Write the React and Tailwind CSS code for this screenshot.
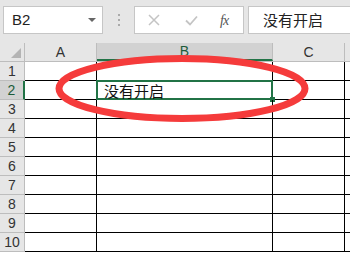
import React from 'react';

const rows = [1, 2, 3, 4, 5, 6, 7, 8, 9, 10];

const App = () => {
  return (
    <div className="relative w-[350px] h-[253px] overflow-hidden bg-white font-['Liberation_Sans','Noto_Sans_CJK_SC',sans-serif]">
      {/* formula bar */}
      <div className="flex items-start h-[43px] pt-[6px] bg-[#e6e6e6]">
        <div className="shrink-0 ml-[3px] w-[100px] h-[28px] bg-white border border-[#c6c6c6] flex items-center justify-between pl-[8px] pr-[6px]">
          <span className="text-[15px] text-[#222]">B2</span>
          <span className="w-0 h-0 border-l-[4px] border-r-[4px] border-t-[4px] border-l-transparent border-r-transparent border-t-[#666]"></span>
        </div>
        <div className="shrink-0 w-[31px] h-[28px] flex flex-col items-center justify-center gap-[3px]">
          <span className="w-[2px] h-[2px] bg-[#aaa]"></span>
          <span className="w-[2px] h-[2px] bg-[#aaa]"></span>
          <span className="w-[2px] h-[2px] bg-[#aaa]"></span>
        </div>
        <div className="shrink-0 w-[110px] h-[28px] bg-white border border-[#c6c6c6] flex items-center">
          <svg width="12" height="12" viewBox="0 0 12 12" className="ml-[13px]">
            <path d="M1 1 L11 11 M11 1 L1 11" stroke="#c4c4c4" strokeWidth="1.5" fill="none" />
          </svg>
          <svg width="13" height="11" viewBox="0 0 13 11" className="ml-[25px]">
            <path d="M1 5.5 L5 9.5 L12 1.5" stroke="#c4c4c4" strokeWidth="1.8" fill="none" />
          </svg>
          <span className="ml-[22px] text-[14px] italic text-[#555] font-['Liberation_Serif',serif] tracking-[-1px]">fx</span>
        </div>
        <div className="shrink-0 ml-[4px] w-[120px] h-[28px] bg-white border border-[#c6c6c6] flex items-center pl-[14px]">
          <span className="text-[15px] text-[#222] font-['Noto_Sans_CJK_SC',sans-serif]">没有开启</span>
        </div>
      </div>

      {/* column headers */}
      <div className="flex h-[19px] bg-[#e6e6e6] border-b border-[#bdbdbd]">
        <div className="w-[25px] shrink-0 border-r border-[#bdbdbd] flex items-end justify-end pr-[3px] pb-[3px]">
          <svg width="10" height="10" viewBox="0 0 10 10">
            <path d="M10 0 L10 10 L0 10 Z" fill="#b4b4b4" />
          </svg>
        </div>
        <div className="w-[72px] shrink-0 flex items-center justify-center text-[14px] text-[#333] border-r border-[#bdbdbd]">A</div>
        <div className="w-[176px] shrink-0 flex items-center justify-center text-[14px] text-[#1d5c3a] bg-[#d2d2d2] border-b-2 border-[#217346] border-r border-r-[#bdbdbd]">B</div>
        <div className="w-[72px] shrink-0 flex items-center justify-center text-[14px] text-[#333] border-r border-[#bdbdbd]">C</div>
        <div className="flex-1"></div>
      </div>

      {/* rows */}
      {rows.map((r) => (
        <div key={r} className="flex h-[19px]">
          <div
            className={
              r === 2
                ? 'w-[25px] shrink-0 flex items-center justify-center text-[14px] text-[#1d5c3a] bg-[#d2d2d2] border-r-2 border-[#217346] border-b border-b-[#bdbdbd]'
                : 'w-[25px] shrink-0 flex items-center justify-center text-[14px] text-[#333] bg-[#e6e6e6] border-r border-b border-[#bdbdbd]'
            }
          >
            {r}
          </div>
          <div className="w-[72px] shrink-0 border-r border-b border-black"></div>
          <div className="relative w-[176px] shrink-0 border-r border-b border-black">
            {r === 2 && (
              <>
                <div className="absolute -left-[1px] -top-[1px] -right-[1px] -bottom-[1px] border-2 border-[#217346]"></div>
                <div className="absolute -right-[3px] -bottom-[3px] w-[5px] h-[5px] bg-[#217346]"></div>
                <span className="absolute left-[7px] top-[0px] text-[15px] leading-[19px] text-[#111] font-['Noto_Sans_CJK_SC',sans-serif]">没有开启</span>
              </>
            )}
          </div>
          <div className="w-[72px] shrink-0 border-r border-b border-black"></div>
          <div className="flex-1 border-b border-black"></div>
        </div>
      ))}

      {/* red annotation ellipse */}
      <svg className="absolute left-0 top-0 pointer-events-none" width="350" height="253" viewBox="0 0 350 253">
        <ellipse cx="182" cy="88.5" rx="123" ry="30" fill="none" stroke="#f53b3b" strokeWidth="7" />
      </svg>
    </div>
  );
};

export default App;
